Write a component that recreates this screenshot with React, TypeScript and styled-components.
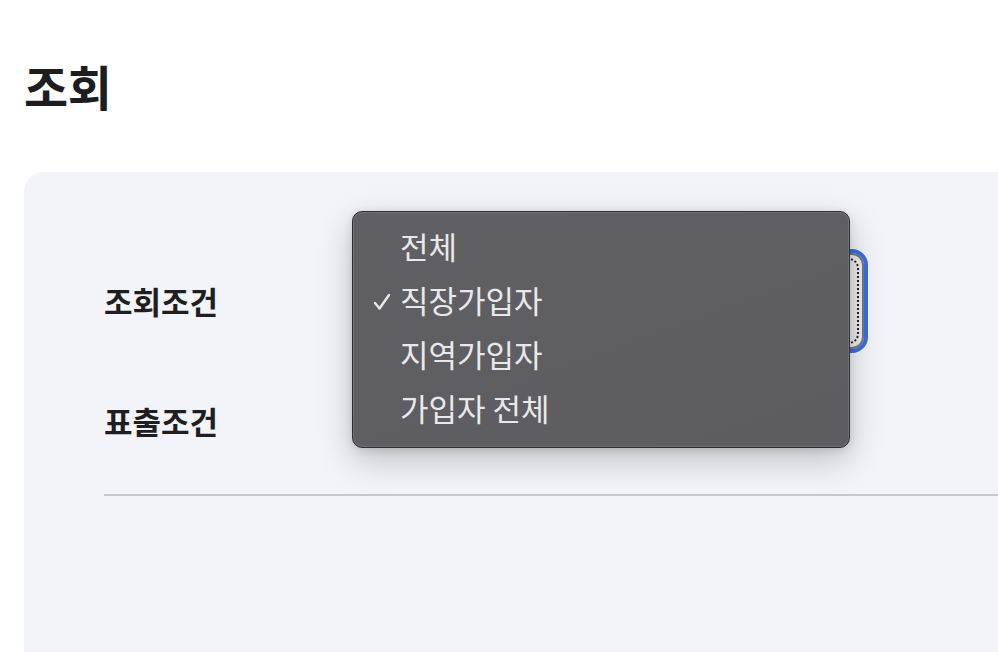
import React from 'react';
import styled, { createGlobalStyle } from 'styled-components';

type OptionType = {
  label: string;
  selected?: boolean;
};

const options: OptionType[] = [
  { label: '전체' },
  { label: '직장가입자', selected: true },
  { label: '지역가입자' },
  { label: '가입자 전체' },
];

const GlobalStyle = createGlobalStyle`
  html, body {
    margin: 0;
    padding: 0;
    background: #ffffff;
    overflow: hidden;
  }
  body {
    font-family: "Noto Sans CJK KR", "Noto Sans", sans-serif;
    color: #1d1d1f;
  }
`;

const Page = styled.div`
  width: 998px;
  height: 652px;
  padding-left: 24px;
  box-sizing: border-box;
  overflow: hidden;
`;

const Title = styled.h1`
  margin: 0;
  padding-top: 50px;
  height: 172px;
  box-sizing: border-box;
  font-size: 48px;
  font-weight: 700;
  line-height: 70px;
  letter-spacing: -0.5px;
  color: #1d1d1f;
`;

const Panel = styled.section`
  width: 1100px;
  height: 600px;
  background: #f3f4f9;
  border-top-left-radius: 20px;
  padding: 77px 0 0 80px;
  box-sizing: border-box;
`;

const Form = styled.div`
  display: grid;
  grid-template-columns: 248px 1fr;
  grid-template-rows: 104px 100px;
  row-gap: 18px;
  align-items: center;
`;

const Label = styled.div`
  font-size: 31px;
  font-weight: 700;
  line-height: 40px;
  color: #1f1f21;
`;

const SelectWrap = styled.div`
  position: relative;
  width: 516px;
  height: 104px;
`;

const SelectBox = styled.div`
  width: 100%;
  height: 100%;
  box-sizing: border-box;
  border: 4px solid #3a6fe0;
  border-radius: 16px;
  background: #ececef;
  box-shadow: inset 0 0 0 2px #77777a;
  position: relative;

  &::after {
    content: '';
    position: absolute;
    inset: 5px;
    border: 2px dotted #222;
    border-radius: 10px;
  }
`;

const Menu = styled.ul`
  position: absolute;
  top: -38px;
  left: 0;
  width: 498px;
  height: 237px;
  box-sizing: border-box;
  margin: 0;
  padding: 7px 0 0;
  list-style: none;
  background: linear-gradient(160deg, #5f5f64 0%, #5c5c61 100%);
  border: 1px solid #2e2e31;
  border-radius: 10px;
  box-shadow: inset 0 0 0 1px rgba(255, 255, 255, 0.12),
    0 12px 34px rgba(0, 0, 0, 0.22), 0 2px 8px rgba(0, 0, 0, 0.12);
  z-index: 2;
`;

const MenuItem = styled.li`
  position: relative;
  height: 54px;
  padding-left: 47px;
  font-size: 31px;
  line-height: 54px;
  color: #e9e9eb;
`;

const Check = styled.svg`
  position: absolute;
  left: 20px;
  top: 20px;
  width: 18px;
  height: 18px;
`;

const Divider = styled.hr`
  margin: 23px 0 0;
  border: none;
  height: 2px;
  background: #c7c7cc;
`;

const App: React.FC = () => {
  return (
    <Page>
      <GlobalStyle />
      <Title>조회</Title>
      <Panel>
        <Form>
          <Label>조회조건</Label>
          <SelectWrap>
            <SelectBox />
            <Menu>
              {options.map((el, i) => (
                <MenuItem key={i}>
                  {el.selected && (
                    <Check viewBox="0 0 18 18">
                      <path
                        d="M2 10 L6.5 15.5 L16 2"
                        fill="none"
                        stroke="#e9e9eb"
                        strokeWidth="2.4"
                        strokeLinecap="round"
                        strokeLinejoin="round"
                      />
                    </Check>
                  )}
                  {el.label}
                </MenuItem>
              ))}
            </Menu>
          </SelectWrap>
          <Label>표출조건</Label>
          <div />
        </Form>
        <Divider />
      </Panel>
    </Page>
  );
};

export default App;
